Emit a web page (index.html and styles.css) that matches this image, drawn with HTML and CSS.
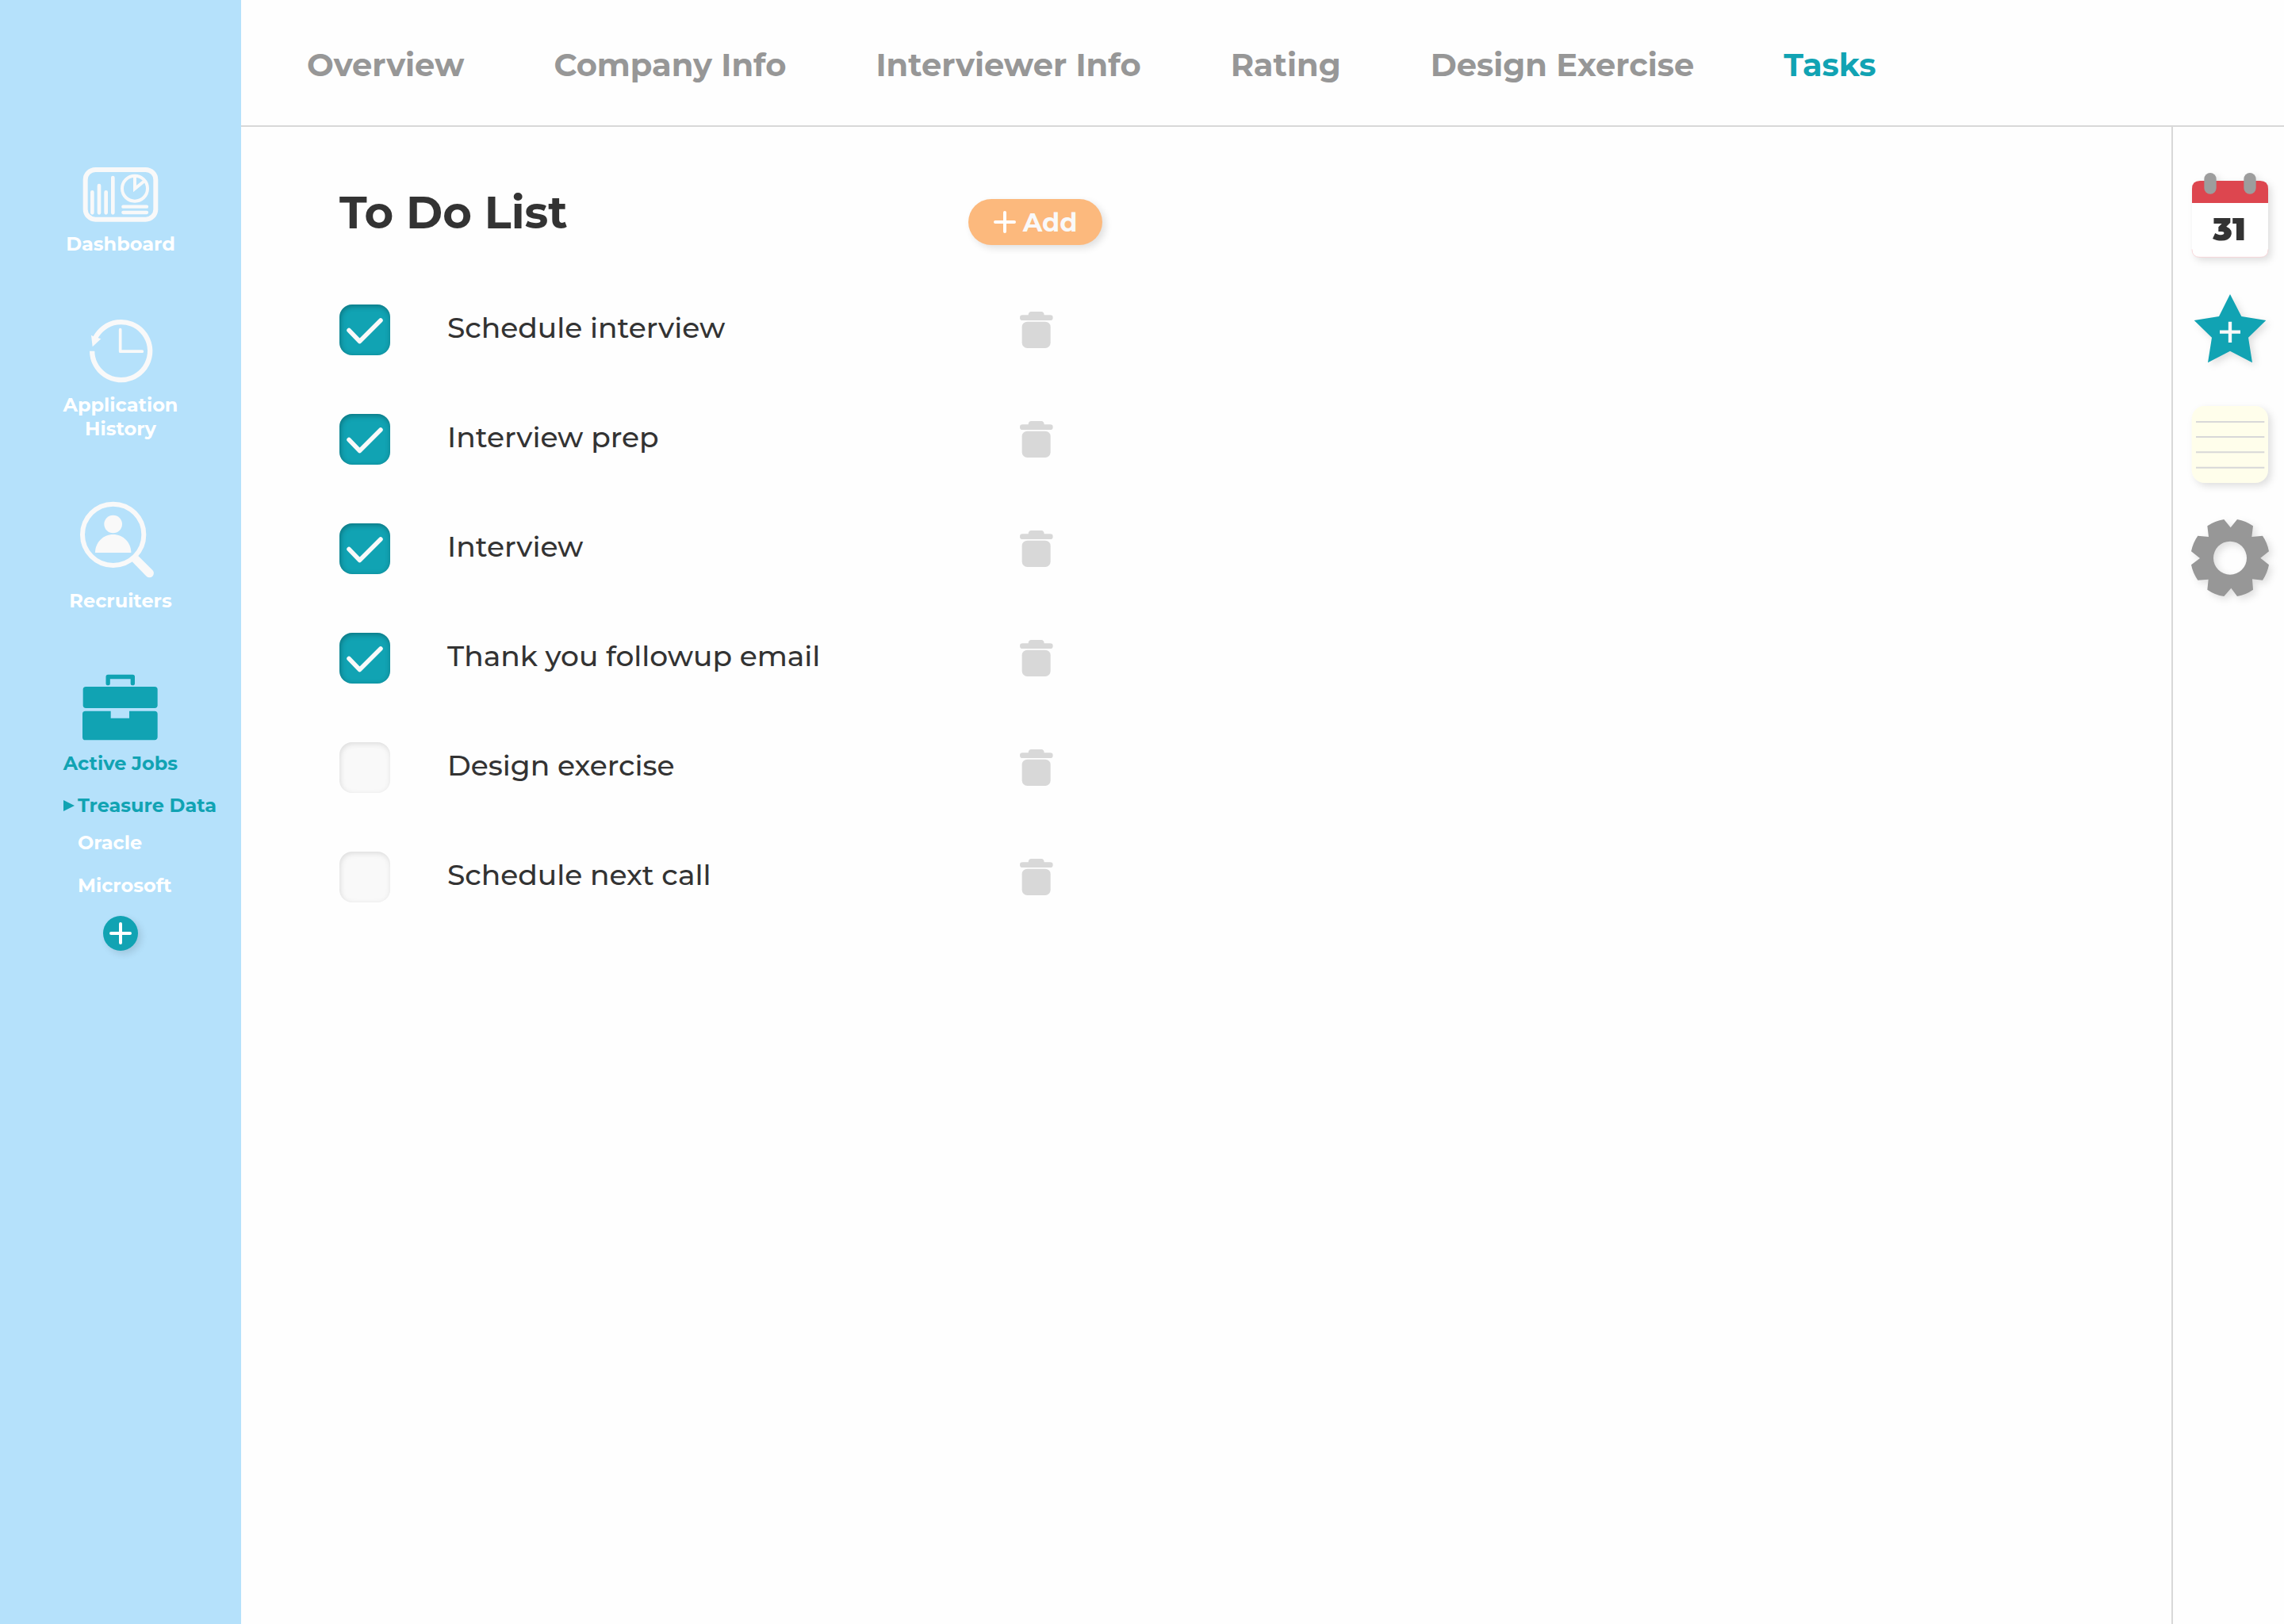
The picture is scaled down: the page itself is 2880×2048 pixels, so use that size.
FILE: index.html
```html
<!DOCTYPE html>
<html lang="en">
<head>
<meta charset="utf-8">
<title>Tasks - Treasure Data</title>
<meta name="viewport" content="width=device-width, initial-scale=1">
<link rel="stylesheet" href="styles.css">
</head>
<body>
<svg class="sprite" aria-hidden="true">
  <symbol id="check" viewBox="0 0 64 64"><path d="M12 32.500L25.500 46.500L52 20" fill="none" stroke="#f9f9f9" stroke-width="5.500" stroke-linecap="round" stroke-linejoin="round"/></symbol>
  <symbol id="trash" viewBox="0 0 126 138"><path fill="#d8d8d8" d="M32 13C32 5 36 0 43 0H81C88 0 92 5 92 13H115A9.500 9.500 0 0 1 115 33H10A9.500 9.500 0 0 1 10 13Z"/><rect x="8" y="38" width="108" height="100" rx="20" fill="#d8d8d8"/></symbol>
  <symbol id="plus" viewBox="0 0 28 28"><path d="M14 2V26M2 14H26" fill="none" stroke="#fff" stroke-width="4" stroke-linecap="round"/></symbol>
</svg>
<div class="app">
  <aside class="sidebar">
    <nav class="side-nav" aria-label="Main">
      <a class="side-link" href="#dashboard">
        <svg class="side-icon" width="104" height="68" viewBox="120 63 312 204" fill="none" stroke="#f9f9f9" aria-hidden="true">
          <rect x="143" y="72" width="266" height="188" rx="38" stroke-width="18"/>
          <path d="M169 157V235M195 132V235M221 157V235M247 102V235" stroke-width="14" stroke-linecap="round"/>
          <circle cx="330" cy="143" r="48" stroke-width="12"/>
          <path d="M330 96V144L367 114" stroke-width="12"/>
          <path d="M286 212H375M286 234H375" stroke-width="13" stroke-linecap="round"/>
        </svg>
        <span>Dashboard</span>
      </a>
      <a class="side-link" href="#history">
        <svg class="side-icon" width="104" height="83" viewBox="120 627 312 249" fill="none" stroke="#f9f9f9" aria-hidden="true">
          <path d="M168.500 758A109.500 109.500 0 1 0 180 709" stroke-width="19"/>
          <path d="M165 698L178 705L190 708L202 712L170 742Z" fill="#f9f9f9" stroke="none"/>
          <path d="M275 677V759.500H358" stroke-width="11" stroke-linecap="round" stroke-linejoin="round"/>
        </svg>
        <span>Application<br>History</span>
      </a>
      <a class="side-link" href="#recruiters">
        <svg class="side-icon" width="104" height="97" viewBox="120 66 312 291" fill="#f9f9f9" aria-hidden="true">
          <circle cx="248" cy="193" r="116" fill="none" stroke="#f9f9f9" stroke-width="18"/>
          <circle cx="248" cy="153" r="34"/>
          <path d="M180 261C180 222 210 192 248 192S316 222 316 261Z"/>
          <path d="M319 294L342 272L397 327A16 16 0 0 1 374 350Z"/>
        </svg>
        <span>Recruiters</span>
      </a>
      <a class="side-link side-link--active" href="#jobs">
        <svg class="side-icon" width="104" height="85" viewBox="120 717 312 255" fill="#11a3b3" aria-hidden="true">
          <path d="M228.500 755V730.500H322V755" fill="none" stroke="#11a3b3" stroke-width="16" stroke-linecap="round" stroke-linejoin="round"/>
          <rect x="134" y="768" width="282" height="81" rx="11"/>
          <path d="M143 860H239V887H309V860H405Q416 860 416 871V958Q416 969 405 970H143Q132 970 132 959V871Q132 860 143 860Z"/>
        </svg>
        <span>Active Jobs</span>
      </a>
    </nav>
    <div class="jobs">
      <a class="job-current" href="#treasure-data">
        <svg width="14" height="14" viewBox="0 0 14 14" fill="#11a3b3" aria-hidden="true"><path d="M0 0L14 7L0 14Z"/></svg>
        Treasure Data
      </a>
      <ul class="job-list">
        <li><a href="#oracle">Oracle</a></li>
        <li><a href="#microsoft">Microsoft</a></li>
      </ul>
    </div>
    <button class="add-job" type="button" aria-label="Add job"><svg width="28" height="28"><use href="#plus"/></svg></button>
  </aside>
  <div class="page">
    <header class="topbar">
      <nav class="tabs" aria-label="Job sections">
        <a href="#overview">Overview</a>
        <a href="#company">Company Info</a>
        <a href="#interviewer">Interviewer Info</a>
        <a href="#rating">Rating</a>
        <a href="#exercise">Design Exercise</a>
        <a class="current" href="#tasks" aria-current="page">Tasks</a>
      </nav>
    </header>
    <div class="content">
      <main class="tasks">
        <div class="todo">
          <div class="todo-head">
            <h1>To Do List</h1>
            <button class="add-task" type="button"><svg width="28" height="28" aria-hidden="true"><use href="#plus"/></svg>Add</button>
          </div>
          <ul class="task-list">
            <li class="task"><span class="tick"><input type="checkbox" id="t1" checked><svg aria-hidden="true"><use href="#check"/></svg></span><label for="t1">Schedule interview</label><button class="remove" type="button" aria-label="Delete Schedule interview"><svg width="42" height="46"><use href="#trash"/></svg></button></li>
            <li class="task"><span class="tick"><input type="checkbox" id="t2" checked><svg aria-hidden="true"><use href="#check"/></svg></span><label for="t2">Interview prep</label><button class="remove" type="button" aria-label="Delete Interview prep"><svg width="42" height="46"><use href="#trash"/></svg></button></li>
            <li class="task"><span class="tick"><input type="checkbox" id="t3" checked><svg aria-hidden="true"><use href="#check"/></svg></span><label for="t3">Interview</label><button class="remove" type="button" aria-label="Delete Interview"><svg width="42" height="46"><use href="#trash"/></svg></button></li>
            <li class="task"><span class="tick"><input type="checkbox" id="t4" checked><svg aria-hidden="true"><use href="#check"/></svg></span><label for="t4">Thank you followup email</label><button class="remove" type="button" aria-label="Delete Thank you followup email"><svg width="42" height="46"><use href="#trash"/></svg></button></li>
            <li class="task"><span class="tick"><input type="checkbox" id="t5"><svg aria-hidden="true"><use href="#check"/></svg></span><label for="t5">Design exercise</label><button class="remove" type="button" aria-label="Delete Design exercise"><svg width="42" height="46"><use href="#trash"/></svg></button></li>
            <li class="task"><span class="tick"><input type="checkbox" id="t6"><svg aria-hidden="true"><use href="#check"/></svg></span><label for="t6">Schedule next call</label><button class="remove" type="button" aria-label="Delete Schedule next call"><svg width="42" height="46"><use href="#trash"/></svg></button></li>
          </ul>
        </div>
      </main>
      <aside class="rail" aria-label="Tools">
        <button type="button" aria-label="Calendar">
          <svg width="96" height="107" viewBox="102 204 288 321">
            <path d="M102 318V264Q102 234 132 234H360Q390 234 390 264V318Z" fill="#dd464f"/>
            <path d="M102 318H390V493Q390 523 360 523H132Q102 523 102 493Z" fill="#fff"/>
            <path d="M102 493Q102 523 132 523H360Q390 523 390 493" fill="none" stroke="#f6c8cb" stroke-width="2"/>
            <rect x="148" y="204" width="46" height="80" rx="23" fill="#9d9d9d"/>
            <rect x="298" y="204" width="46" height="80" rx="23" fill="#9d9d9d"/>
            <text class="cal-day" x="243" y="459" text-anchor="middle">31</text>
          </svg>
        </button>
        <button type="button" aria-label="Add to favorites">
          <svg width="96" height="95" viewBox="102 663 288 285">
            <path d="M246 663L289 747L382 762L315 827L330 922L246 878L162 922L177 827L110 762L204 747Z" fill="#11a3b3"/>
            <path d="M246 767V846M207 806H285" stroke="#f9f9f9" stroke-width="13"/>
          </svg>
        </button>
        <button type="button" aria-label="Notes">
          <svg width="96" height="97" viewBox="102 96 288 291">
            <rect x="101" y="96" width="289" height="291" rx="48" fill="#fffeeb"/>
            <path d="M117 156H376M117 213H376M117 271H376M117 329H376" stroke="#d8d8d8" stroke-width="6"/>
          </svg>
        </button>
        <button type="button" aria-label="Settings">
          <svg width="96" height="97" viewBox="102 525 288 291">
            <path fill="#979797" fill-rule="evenodd" d="M160 550A149 149 0 0 1 223 525L248 556L273 525A149 149 0 0 1 333 550L328 591L369 587A149 149 0 0 1 393 646L361 671L393 697A149 149 0 0 1 369 755L330 751L333 791A149 149 0 0 1 273 816L250 785L223 816A149 149 0 0 1 160 791L164 752L124 755A149 149 0 0 1 99 697L132 672L99 646A149 149 0 0 1 124 587L165 591ZM246 608A63 63 0 1 0 246 734A63 63 0 1 0 246 608Z"/>
          </svg>
        </button>
      </aside>
    </div>
  </div>
</div>
</body>
</html>
```
FILE: styles.css
```css
:root {
  --teal: #11a3b3;
  --sky: #b5e1fb;
  --grey: #979797;
  --line: #d8d8d8;
  --ink: #333;
  --shadow: 4px 4px 10px rgba(0, 0, 0, .12);
}

* { box-sizing: border-box; }

body {
  margin: 0;
  color: var(--ink);
  background: #fefefe;
  font-family: Montserrat, Inter, "Liberation Sans", sans-serif;
}

a { color: inherit; text-decoration: none; }

ul { margin: 0; padding: 0; list-style: none; }

button {
  padding: 0;
  border: 0;
  background: none;
  font: inherit;
  color: inherit;
  cursor: pointer;
}

svg { display: block; overflow: visible; }

.sprite { position: absolute; width: 0; height: 0; }

.app { display: flex; min-height: 100vh; }

/* Left sidebar */
.sidebar {
  flex: none;
  display: flex;
  flex-direction: column;
  align-items: center;
  width: 304px;
  padding-top: 211px;
  background: var(--sky);
  color: #fff;
  font-size: 24px;
  font-weight: 700;
  line-height: 30px;
}

.side-nav {
  display: flex;
  flex-direction: column;
  gap: 76px;
}

.side-link {
  display: flex;
  flex-direction: column;
  align-items: center;
  gap: 14px;
  text-align: center;
}

.side-link--active, .job-current { color: var(--teal); }

.jobs {
  align-self: stretch;
  margin: 23px 0;
  padding-left: 80px;
}

.job-current {
  display: flex;
  align-items: center;
  gap: 4px;
}

.job-list {
  display: grid;
  gap: 24px;
  margin-top: 17px;
  padding-left: 18px;
}

.add-job {
  display: grid;
  place-items: center;
  width: 44px;
  height: 44px;
  border-radius: 50%;
  background: var(--teal);
  box-shadow: var(--shadow);
}

/* Header tabs */
.page {
  flex: 1;
  display: flex;
  flex-direction: column;
  min-width: 0;
}

.topbar {
  padding: 58px 83px 52px;
  border-bottom: 2px solid var(--line);
}

.tabs {
  display: flex;
  gap: 113px;
  color: var(--grey);
  font-size: 40px;
  font-weight: 700;
  line-height: 48px;
}

.tabs .current { color: var(--teal); }

.content { flex: 1; display: flex; }

/* To do list */
.tasks { flex: 1; padding: 70px 124px; }

.todo { max-width: 962px; }

.todo-head {
  display: flex;
  align-items: flex-end;
  justify-content: space-between;
}

h1 {
  margin: 0;
  padding-bottom: 3px;
  font-size: 56px;
  font-weight: 700;
  line-height: 76px;
}

.add-task {
  display: flex;
  align-items: center;
  justify-content: center;
  gap: 9px;
  width: 169px;
  height: 58px;
  border-radius: 29px;
  background: #fcb97d;
  box-shadow: var(--shadow);
  color: #f9f9f9;
  font-size: 32px;
  font-weight: 700;
}

.task-list {
  display: grid;
  gap: 74px;
  margin-top: 75px;
  padding-right: 62px;
}

.task {
  display: flex;
  align-items: center;
  gap: 72px;
}

.task label {
  flex: 1;
  align-self: flex-start;
  font-size: 36px;
  font-weight: 500;
  line-height: 58px;
}

.tick { display: grid; width: 64px; height: 64px; }

.tick input, .tick svg {
  grid-area: 1 / 1;
  width: 64px;
  height: 64px;
  margin: 0;
}

.tick input {
  appearance: none;
  border-radius: 16px;
  background: #f9f9f9;
  box-shadow: inset 1px 2px 7px rgba(0, 0, 0, .12);
}

.tick svg { visibility: hidden; pointer-events: none; }

.tick input:checked {
  background: var(--teal);
  box-shadow: inset 1px 2px 7px rgba(0, 0, 0, .3);
}

.tick input:checked + svg { visibility: visible; position: relative; }

/* Tool rail */
.rail {
  display: flex;
  flex-direction: column;
  align-items: center;
  gap: 46px;
  padding: 58px 20px 58px 24px;
  border-left: 2px solid var(--line);
}

.rail svg { filter: drop-shadow(4px 4px 5px rgba(0, 0, 0, .12)); }

.cal-day {
  font-size: 120px;
  font-weight: 900;
  fill: var(--ink);
}
```
